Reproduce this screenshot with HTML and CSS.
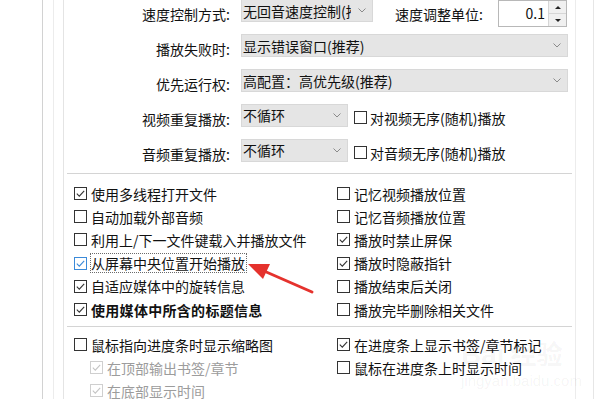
FILE: index.html
```html
<!DOCTYPE html>
<html lang="zh-CN">
<head>
  <meta charset="UTF-8" />
  <title>播放设置</title>
  <link rel="stylesheet" href="styles.css">
</head>
<body>
  <div class="frame">
    <div class="tab">
      <div class="page">
        <div class="opts">
          <div class="row">
            <span class="lbl">速度控制方式:</span>
            <div class="sel w-speed">
              <span class="txt">无回音速度控制(推荐)</span>
              <span class="chev"><svg width="8" height="5" viewBox="0 0 8 5"><polyline points="0.5,0.5 4,4 7.5,0.5" fill="none" stroke="#8a8a8a" stroke-width="1"/></svg></span>
            </div>
            <span class="lbl2">速度调整单位:</span>
            <div class="spin">
              <span class="val">0.1</span>
              <div class="btns"><i class="up"></i><i class="dn"></i></div>
            </div>
          </div>
          <div class="row">
            <span class="lbl">播放失败时:</span>
            <div class="sel w-full">
              <span class="txt">显示错误窗口(推荐)</span>
              <span class="chev"><svg width="8" height="5" viewBox="0 0 8 5"><polyline points="0.5,0.5 4,4 7.5,0.5" fill="none" stroke="#8a8a8a" stroke-width="1"/></svg></span>
            </div>
          </div>
          <div class="row">
            <span class="lbl">优先运行权:</span>
            <div class="sel w-full">
              <span class="txt">高配置：高优先级(推荐)</span>
              <span class="chev"><svg width="8" height="5" viewBox="0 0 8 5"><polyline points="0.5,0.5 4,4 7.5,0.5" fill="none" stroke="#8a8a8a" stroke-width="1"/></svg></span>
            </div>
          </div>
          <div class="row">
            <span class="lbl">视频重复播放:</span>
            <div class="sel w-small">
              <span class="txt up-txt">不循环</span>
              <span class="chev"><svg width="8" height="5" viewBox="0 0 8 5"><polyline points="0.5,0.5 4,4 7.5,0.5" fill="none" stroke="#8a8a8a" stroke-width="1"/></svg></span>
            </div>
            <label class="cb-inline"><span class="cb"></span>对视频无序(随机)播放</label>
          </div>
          <div class="row">
            <span class="lbl">音频重复播放:</span>
            <div class="sel w-small">
              <span class="txt up-txt">不循环</span>
              <span class="chev"><svg width="8" height="5" viewBox="0 0 8 5"><polyline points="0.5,0.5 4,4 7.5,0.5" fill="none" stroke="#8a8a8a" stroke-width="1"/></svg></span>
            </div>
            <label class="cb-inline"><span class="cb"></span>对音频无序(随机)播放</label>
          </div>
        </div>

        <div class="sep"></div>

        <div class="checks">
          <label class="item"><span class="cb on"><svg width="11" height="11" viewBox="0 0 11 11"><polyline points="1.8,5.6 4.3,8.1 9.2,2.8" /></svg></span>使用多线程打开文件</label>
          <label class="item"><span class="cb"></span>记忆视频播放位置</label>
          <label class="item"><span class="cb"></span>自动加载外部音频</label>
          <label class="item"><span class="cb"></span>记忆音频播放位置</label>
          <label class="item"><span class="cb"></span>利用上/下一文件键载入并播放文件</label>
          <label class="item"><span class="cb on"><svg width="11" height="11" viewBox="0 0 11 11"><polyline points="1.8,5.6 4.3,8.1 9.2,2.8" /></svg></span>播放时禁止屏保</label>
          <label class="item hot"><span class="cb on"><svg width="11" height="11" viewBox="0 0 11 11"><polyline points="1.8,5.6 4.3,8.1 9.2,2.8" /></svg></span><span class="focus">从屏幕中央位置开始播放</span></label>
          <label class="item"><span class="cb on"><svg width="11" height="11" viewBox="0 0 11 11"><polyline points="1.8,5.6 4.3,8.1 9.2,2.8" /></svg></span>播放时隐蔽指针</label>
          <label class="item"><span class="cb on"><svg width="11" height="11" viewBox="0 0 11 11"><polyline points="1.8,5.6 4.3,8.1 9.2,2.8" /></svg></span>自适应媒体中的旋转信息</label>
          <label class="item"><span class="cb"></span>播放结束后关闭</label>
          <label class="item strong"><span class="cb on"><svg width="11" height="11" viewBox="0 0 11 11"><polyline points="1.8,5.6 4.3,8.1 9.2,2.8" /></svg></span>使用媒体中所含的标题信息</label>
          <label class="item"><span class="cb"></span>播放完毕删除相关文件</label>
        </div>

        <div class="sep sep2"></div>

        <div class="checks checks2">
          <label class="item"><span class="cb"></span>鼠标指向进度条时显示缩略图</label>
          <label class="item"><span class="cb on"><svg width="11" height="11" viewBox="0 0 11 11"><polyline points="1.8,5.6 4.3,8.1 9.2,2.8" /></svg></span>在进度条上显示书签/章节标记</label>
          <label class="item dis"><span class="cb on"><svg width="11" height="11" viewBox="0 0 11 11"><polyline points="1.8,5.6 4.3,8.1 9.2,2.8" /></svg></span>在顶部输出书签/章节</label>
          <label class="item"><span class="cb"></span>鼠标在进度条上时显示时间</label>
          <label class="item dis"><span class="cb on"><svg width="11" height="11" viewBox="0 0 11 11"><polyline points="1.8,5.6 4.3,8.1 9.2,2.8" /></svg></span>在底部显示时间</label>
        </div>
      </div>
    </div>
  </div>

  <!-- watermark and annotation drawn over the dialog -->
  <div class="mark">
    <div class="mark-logo">Bai<span class="mark-cn">经验</span></div>
    <div class="mark-url">jingyan.baidu.com</div>
  </div>

  <svg class="arrow" width="600" height="400" viewBox="0 0 600 400">
    <line x1="264" y1="271" x2="312" y2="292" stroke="#e5322d" stroke-width="3" stroke-linecap="round"/>
    <polygon points="248,264 270,264 263,279" fill="#e5322d"/>
  </svg>
</body>
</html>
```

FILE: styles.css
```css
* {
  box-sizing: border-box;
}

body {
  margin: 0;
  height: 400px;
  overflow: hidden;
  position: relative;
  background: #ffffff;
  font-family: "Noto Sans CJK SC", "Noto Sans", sans-serif;
  font-size: 14px;
  color: #111;
}

/* nested window borders */
.frame {
  margin-left: 42px;
  width: 552px;
  height: 400px;
  border-left: 1px solid #d2d2d2;
  border-right: 1px solid #e6e6e6;
}

.tab {
  margin-left: 10px;
  width: 523px;
  height: 100%;
  border-left: 1px solid #ececec;
  border-right: 1px solid #ececec;
}

.page {
  margin-left: 9px;
  height: 100%;
  border-left: 1px solid #e4e4e4;
}

/* top option rows */
.opts {
  margin-top: -1px;
  display: flex;
  flex-direction: column;
  gap: 12px;
}

.row {
  display: flex;
  align-items: flex-start;
  height: 23px;
}

.lbl {
  width: 166px;
  margin-right: 11px;
  padding-top: 4px;
  text-align: right;
  line-height: 23px;
  white-space: nowrap;
}

.lbl2 {
  width: 90px;
  margin-left: 22px;
  padding-top: 4px;
  line-height: 23px;
  white-space: nowrap;
}

.sel {
  display: flex;
  height: 23px;
  padding-left: 1px;
  background: #e5e5e5;
  border: 1px solid #d8d8d8;
}

.sel .txt {
  flex: 1;
  overflow: hidden;
  white-space: nowrap;
  line-height: 23px;
}

.sel .up-txt {
  line-height: 20px;
}

.sel .chev {
  width: 21px;
  flex: none;
  display: flex;
  align-items: center;
  justify-content: center;
}

.w-speed { width: 132px; }
.w-full { width: 327px; }
.w-small { width: 107px; }

.spin {
  display: flex;
  width: 69px;
  height: 27px;
  margin-left: 13px;
  margin-top: 1px;
  background: #fff;
  border: 1px solid #b8b8b8;
}

.spin .val {
  flex: 1;
  padding-right: 3px;
  text-align: right;
  line-height: 25px;
}

.spin .btns {
  width: 18px;
  display: flex;
  flex-direction: column;
  border-left: 1px solid #d6d6d6;
}

.btns i {
  flex: 1;
  display: flex;
  align-items: center;
  justify-content: center;
  background: #f0f0f0;
}

.btns .dn {
  border-top: 1px solid #d6d6d6;
}

.btns .up::before,
.btns .dn::before {
  content: "";
  border-left: 3px solid transparent;
  border-right: 3px solid transparent;
}

.btns .up::before { border-bottom: 3px solid #222; }
.btns .dn::before { border-top: 3px solid #222; }

.cb-inline {
  display: flex;
  align-items: center;
  height: 23px;
  margin-left: 6px;
  padding-top: 4px;
  white-space: nowrap;
}

/* checkboxes */
.cb {
  width: 13px;
  height: 13px;
  flex: none;
  margin-right: 3px;
  display: flex;
  align-items: center;
  justify-content: center;
  background: #fff;
  border: 1px solid #333;
}

.cb svg polyline {
  fill: none;
  stroke: #333;
  stroke-width: 1.1;
}

.sep {
  margin: 11px 3px 0;
  border-top: 1px solid #d4d4d4;
}

.sep2 {
  margin-top: 5px;
}

.checks {
  display: grid;
  grid-template-columns: 263px 1fr;
  grid-auto-rows: 23.2px;
  padding: 8px 0 0 10px;
}

.checks2 {
  grid-auto-rows: 23px;
  padding-top: 6px;
}

.item {
  display: flex;
  align-items: center;
  white-space: nowrap;
}

.item .cb {
  margin-right: 4px;
}

.item.strong {
  font-weight: 700;
  letter-spacing: 0.3px;
}

.item.hot .cb {
  border-color: #3b8ad9;
}

.item.hot .cb svg polyline {
  stroke: #3b8ad9;
}

.focus {
  margin-left: -1px;
  padding: 0 1px 0 0;
  line-height: 18px;
  border: 1px dotted #6b6b6b;
}

.item.dis {
  padding-left: 16px;
  color: #9c9c9c;
}

.item.dis .cb {
  border-color: #cfcfcf;
}

.item.dis .cb svg polyline {
  stroke: #c4c4c4;
}

/* overlays */
.mark {
  position: absolute;
  left: 461px;
  top: 336px;
  color: rgba(0, 0, 0, 0.05);
  font-family: "Liberation Sans", sans-serif;
  pointer-events: none;
}

.mark-logo {
  font-size: 28px;
  font-weight: 700;
  line-height: 34px;
  white-space: nowrap;
}

.mark-cn {
  margin-left: 6px;
  font-family: "Noto Sans CJK SC", sans-serif;
  font-size: 26px;
}

.mark-url {
  font-size: 15px;
  line-height: 18px;
}

.arrow {
  position: absolute;
  left: 0;
  top: 0;
  pointer-events: none;
}
```
